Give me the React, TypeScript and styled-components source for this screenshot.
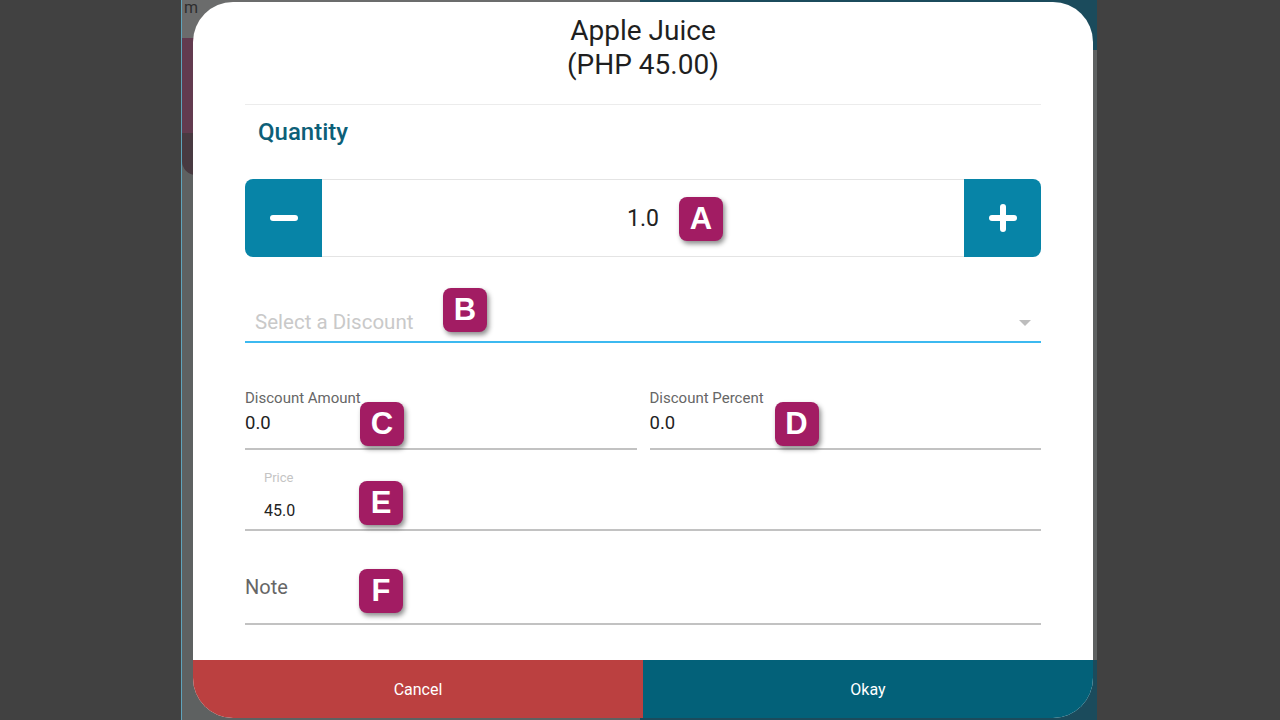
import React from "react"
import styled, { createGlobalStyle } from "styled-components"

const GlobalStyle = createGlobalStyle`
  html, body {
    margin: 0;
    padding: 0;
    background: #414141;
    font-family: Roboto, "Noto Sans", "Liberation Sans", sans-serif;
  }
`

const Stage = styled.div`
  width: 1280px;
  height: 720px;
  padding-left: 181px;
  box-sizing: border-box;
  background: #414141;
  overflow: hidden;
`

const AppFrame = styled.div`
  position: relative;
  width: 916px;
  height: 720px;
  border-left: 1px solid #5fa3bb;
  box-sizing: border-box;
  background: #5e6161;
  display: grid;
  grid-template-columns: 1fr 1fr;
  overflow: hidden;
`

const LeftPane = styled.div`
  display: flex;
  flex-direction: column;
`

const RightPane = styled.div`
  display: flex;
  flex-direction: column;
  justify-content: space-between;
`

const AppHeader = styled.div`
  height: 38px;
  background: #6b6c6c;
  color: #2e2e2e;
  font-size: 16px;
  line-height: 16px;
  padding-left: 2px;
  overflow: hidden;
`

const PinkCard = styled.div`
  height: 95px;
  background: #623b4f;
`

const PinkCardFoot = styled.div`
  height: 42px;
  background: #483a41;
  border-bottom-left-radius: 14px;
`

const TealBar = styled.div<{ $h: number }>`
  height: ${({ $h }) => $h}px;
  background: #1b4b5c;
`

const Modal = styled.div`
  position: absolute;
  left: 11px;
  top: 2px;
  width: 900px;
  height: 716px;
  background: #ffffff;
  border-radius: 40px;
  overflow: hidden;
  display: flex;
  flex-direction: column;
`

const Body = styled.div`
  padding: 0 52px;
  display: flex;
  flex-direction: column;
`

const Title = styled.div`
  padding-top: 12px;
  text-align: center;
  font-size: 28px;
  line-height: 34px;
  color: #1f1f1f;
`

const Divider = styled.div`
  margin-top: 22px;
  height: 1px;
  background: #ececec;
`

const SectionTitle = styled.div`
  margin-top: 14px;
  padding-left: 13px;
  font-size: 24px;
  line-height: 26px;
  font-weight: 500;
  color: #0d5f78;
`

const Stepper = styled.div`
  position: relative;
  margin-top: 34px;
  height: 78px;
  display: flex;
`

const StepButton = styled.button<{ $side: "left" | "right" }>`
  width: 77px;
  border: none;
  padding: 0;
  background: #0784a7;
  display: flex;
  align-items: center;
  justify-content: center;
  border-radius: ${({ $side }) => ($side === "left" ? "8px 0 0 8px" : "0 8px 8px 0")};
`

const StepValue = styled.div`
  flex: 1;
  border: 1px solid #e4e4e4;
  border-left: none;
  border-right: none;
  display: flex;
  align-items: center;
  justify-content: center;
  font-size: 23px;
  color: #222;
`

const SelectField = styled.div`
  position: relative;
  margin-top: 40px;
  padding: 6px 10px 0 10px;
  border-bottom: 2px solid #3cb9f0;
  height: 38px;
  display: flex;
  align-items: center;
  justify-content: space-between;
  font-size: 20.5px;
  color: #c9c9c9;
`

const Caret = styled.div`
  width: 0;
  height: 0;
  border-left: 6px solid transparent;
  border-right: 6px solid transparent;
  border-top: 6px solid #bdbdbd;
  margin-top: 2px;
`

const FieldRow = styled.div`
  margin-top: 47px;
  display: grid;
  grid-template-columns: 1fr 1fr;
  gap: 13px;
`

const Field = styled.div<{ $mt?: number; $indent?: number; $pb: number }>`
  position: relative;
  margin-top: ${({ $mt }) => $mt ?? 0}px;
  padding-left: ${({ $indent }) => $indent ?? 0}px;
  padding-bottom: ${({ $pb }) => $pb}px;
  border-bottom: 2px solid #c2c2c2;
`

const Label = styled.div<{ $size: number; $color: string }>`
  font-size: ${({ $size }) => $size}px;
  line-height: 16px;
  color: ${({ $color }) => $color};
`

const Value = styled.div<{ $size: number; $mt: number; $color?: string }>`
  margin-top: ${({ $mt }) => $mt}px;
  font-size: ${({ $size }) => $size}px;
  line-height: ${({ $size }) => Math.round($size) + 4}px;
  color: ${({ $color }) => $color ?? "#222"};
`

const Footer = styled.div`
  margin-top: auto;
  height: 58px;
  display: grid;
  grid-template-columns: 1fr 1fr;
`

const FooterButton = styled.button<{ $bg: string }>`
  border: none;
  background: ${({ $bg }) => $bg};
  color: #fff;
  font-family: Roboto, "Liberation Sans", sans-serif;
  font-size: 16px;
`

const Badge = styled.div<{ $x: number; $y: number }>`
  position: absolute;
  left: ${({ $x }) => $x}px;
  top: ${({ $y }) => $y}px;
  width: 44px;
  height: 44px;
  border-radius: 8px;
  background: #a21c63;
  color: #fff;
  font-family: "Liberation Sans", Arial, sans-serif;
  font-weight: 700;
  font-size: 31px;
  display: flex;
  align-items: center;
  justify-content: center;
  box-shadow: 2px 3px 5px rgba(0, 0, 0, 0.45);
  z-index: 2;
`

export default function App() {
  return (
    <>
      <GlobalStyle />
      <Stage>
        <AppFrame>
          <LeftPane>
            <AppHeader>m</AppHeader>
            <PinkCard />
            <PinkCardFoot />
          </LeftPane>
          <RightPane>
            <TealBar $h={50} />
            <TealBar $h={60} />
          </RightPane>

          <Modal>
            <Body>
              <Title>
                Apple Juice
                <br />
                (PHP 45.00)
              </Title>
              <Divider />
              <SectionTitle>Quantity</SectionTitle>

              <Stepper>
                <StepButton $side="left" aria-label="decrease">
                  <svg width="30" height="8" viewBox="0 0 30 8">
                    <rect x="1" y="1" width="28" height="6" rx="3" fill="#fff" />
                  </svg>
                </StepButton>
                <StepValue>1.0</StepValue>
                <StepButton $side="right" aria-label="increase">
                  <svg width="30" height="30" viewBox="0 0 30 30">
                    <rect x="1" y="12" width="28" height="6" rx="3" fill="#fff" />
                    <rect x="12" y="1" width="6" height="28" rx="3" fill="#fff" />
                  </svg>
                </StepButton>
                <Badge $x={434} $y={18}>A</Badge>
              </Stepper>

              <SelectField>
                <span>Select a Discount</span>
                <Caret />
                <Badge $x={198} $y={-9}>B</Badge>
              </SelectField>

              <FieldRow>
                <Field $pb={13}>
                  <Label $size={15} $color="#666">Discount Amount</Label>
                  <Value $size={18.5} $mt={6}>0.0</Value>
                  <Badge $x={115} $y={12}>C</Badge>
                </Field>
                <Field $pb={13}>
                  <Label $size={15} $color="#666">Discount Percent</Label>
                  <Value $size={18.5} $mt={6}>0.0</Value>
                  <Badge $x={125} $y={12}>D</Badge>
                </Field>
              </FieldRow>

              <Field $mt={20} $indent={19} $pb={8}>
                <Label $size={13} $color="#c4c4c4">Price</Label>
                <Value $size={16} $mt={15}>45.0</Value>
                <Badge $x={114} $y={11}>E</Badge>
              </Field>

              <Field $mt={44} $pb={24}>
                <Value $size={20} $mt={0} $color="#666">Note</Value>
                <Badge $x={114} $y={-6}>F</Badge>
              </Field>
            </Body>

            <Footer>
              <FooterButton $bg="#bb4040">Cancel</FooterButton>
              <FooterButton $bg="#036179">Okay</FooterButton>
            </Footer>
          </Modal>
        </AppFrame>
      </Stage>
    </>
  )
}
